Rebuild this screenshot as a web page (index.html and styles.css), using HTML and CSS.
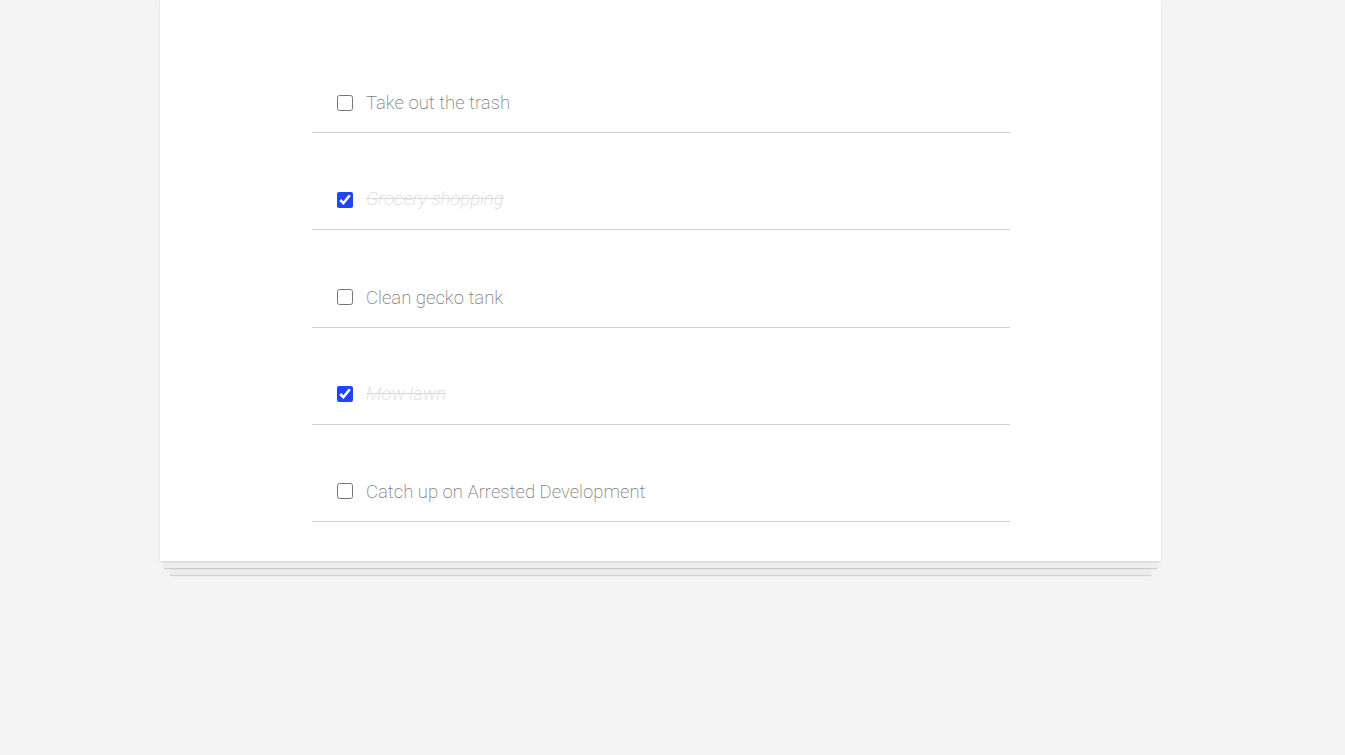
FILE: index.html
```html
<!DOCTYPE html>
<html lang="en">
<head>
<meta charset="utf-8">
<title>Todos</title>
<link rel="stylesheet" href="styles.css">
</head>
<body>
<div class="page">
  <section class="card">
    <ul class="todo-list">
      <li class="todo"><input type="checkbox" class="toggle"><span class="label">Take out the trash</span></li>
      <li class="todo done"><input type="checkbox" class="toggle" checked><span class="label">Grocery shopping</span></li>
      <li class="todo"><input type="checkbox" class="toggle"><span class="label">Clean gecko tank</span></li>
      <li class="todo done"><input type="checkbox" class="toggle" checked><span class="label">Mow lawn</span></li>
      <li class="todo"><input type="checkbox" class="toggle"><span class="label">Catch up on Arrested Development</span></li>
    </ul>
  </section>
</div>
</body>
</html>
```

FILE: styles.css
```css
html, body {
  margin: 0;
  padding: 0;
}
body {
  background: #f4f4f4;
  font-family: Roboto, "Helvetica Neue", Arial, sans-serif;
  font-weight: 300;
  height: 755px;
  overflow: hidden;
  padding-right: 24px;
}
.page {
  width: 1001px;
  margin: 0 auto;
}
.card {
  background: #fff;
  padding: 36px 0 39px 152px;
  box-shadow:
    0 1px 2px rgba(0, 0, 0, 0.12),
    0 11px 0 -4px #eeeeee,
    0 12px 1px -4px rgba(0, 0, 0, 0.14),
    0 24px 0 -10px #ececec,
    0 25px 1px -10px rgba(0, 0, 0, 0.14);
}
.todo-list {
  list-style: none;
  margin: 0;
  padding: 0;
  width: 698px;
}
.todo {
  display: flex;
  align-items: center;
  gap: 13px;
  height: 30px;
  padding: 51.2px 0 15px 25px;
  border-bottom: 1px solid #cfcfcf;
}
.toggle {
  width: 16px;
  height: 16px;
  margin: 1px 0 0 0;
  accent-color: #1f45ff;
  flex: none;
}
.label {
  font-size: 18.5px;
  font-weight: 200;
  color: #7d7d7d;
  line-height: 30px;
  margin-top: 2px;
}
.done .label {
  color: #d9d9d9;
  font-style: italic;
  text-decoration: line-through;
  margin-top: 0;
}
```
